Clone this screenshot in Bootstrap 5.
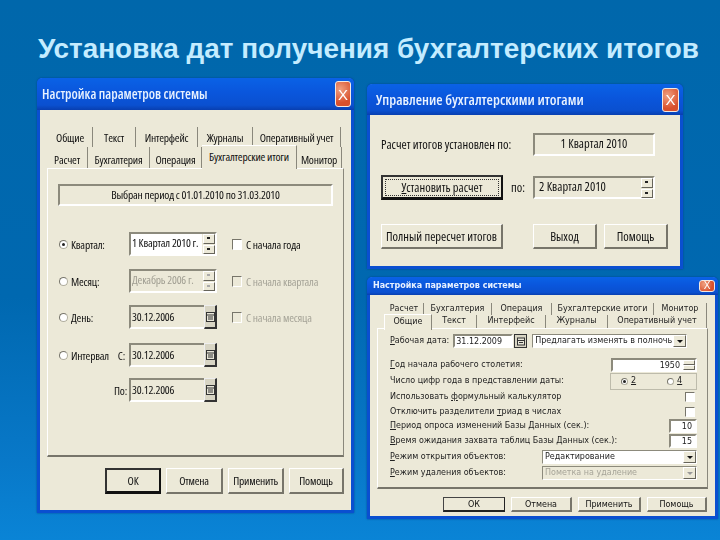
<!DOCTYPE html>
<html lang="ru">
<head>
<meta charset="utf-8">
<title>Установка дат</title>
<link href="https://cdn.jsdelivr.net/npm/bootstrap@5.3.0/dist/css/bootstrap.min.css" rel="stylesheet">
<style>
html,body{width:720px;height:540px;overflow:hidden}
body{position:relative;background:linear-gradient(180deg,#0067ab 0%,#0068b0 55%,#0878c8 85%,#0a84d6 100%);font-family:"Liberation Sans",sans-serif;color:#111}
.slide-title{position:absolute;left:38px;top:33px;margin:0;font:700 27.9px/32px "Liberation Sans",sans-serif;color:#c4ecff;white-space:nowrap}
.xpwin{position:absolute;background:#ece9d8;border:3px solid #0a4fd0;border-top:0;border-radius:5px 5px 0 0;filter:blur(.35px);box-shadow:0 0 2px #003f88;white-space:nowrap}
.w1{left:37px;top:78px;width:317px;height:435px;font:11.5px/15px "Open Sans",sans-serif;font-stretch:75%;letter-spacing:-.2px}
.w2{left:367px;top:84px;width:316px;height:185px;font:12.5px/15px "Open Sans",sans-serif;font-stretch:75%}
.w3{left:367px;top:277px;width:351px;height:242px;font:8px/12px "DejaVu Sans",sans-serif;color:#222}
.tbar{background:linear-gradient(180deg,#0a62e6 0%,#0a56dc 45%,#0a50d0 85%,#083fb0 100%);color:#e8f2ff;font-weight:600;margin:0 -3px;padding:0 3px 0 5px;border-radius:5px 5px 0 0}
.w1 .tbar{height:32px;font-size:13.5px;letter-spacing:0}
.w2 .tbar{height:31px;font-size:14.5px}
.w3 .tbar{height:18px;font-size:8px;font-weight:700;padding-left:6px}
.xbtn{background:radial-gradient(circle at 30% 30%,#f0a080,#d8502c 70%);border:1px solid #f4e8e0;border-radius:3px;color:#fff;font:400 15px/1 "Liberation Sans",sans-serif;display:flex;align-items:center;justify-content:center}
.w1 .xbtn{width:16px;height:26px}
.w2 .xbtn{width:17px;height:24px;margin-right:1px}
.w3 .xbtn{width:16px;height:12px;font-size:10px}
.tabrow{position:relative}
.tabx{height:100%;border-right:1px solid #8a887c;text-align:center;flex:none}
.w1 .tabrow1{margin:17px 0 0 8px;height:20px}
.w1 .tabrow2{margin:0 0 0 7px;height:21px}
.w1 .tabrow1 .tabx{padding-top:3px}
.w1 .tabrow2 .tabx{padding-top:5px}
.tabx.on{background:#ece9d8;position:relative;margin-bottom:-2px;height:calc(100% + 2px);border-top:1px solid #fff;z-index:2}
.w1 .tabrow2 .tabx.on{margin-top:-2px;padding-top:3px;height:24px}
.pane{border:1px solid #fff;border-right-color:#8a887c;border-bottom:2px solid #77756a;background:#ece9d8}
.w1 .pane{margin:0 7px;height:289px;padding:15px 10px 0}
.t45{width:45px}.t43{width:43px}.t62{width:62px}.t55{width:55px}.t89{width:88px}
.t41{width:41px}.t52{width:52px}.t95{width:95px}.t44{width:45px}
.inset{border:2px solid;border-color:#8c8a7c #fff #fff #8c8a7c;background:#ece9d8}
.readout{height:22px;text-align:center;line-height:18px}
.rowa{height:24px;flex:none}
.rb1{width:71px;flex:none}
.radio{width:9px;height:9px;border-radius:50%;background:#fff;border:1px solid #b0ae9e;border-top-color:#77756a;border-left-color:#77756a;display:inline-block;flex:none;margin:0 3px 0 1px;position:relative}
.radio.sel::after{content:"";position:absolute;inset:2px;border-radius:50%;background:#222}
.fld{height:100%;padding-left:1px;line-height:18px;flex:none}
.w1 .fld{width:88px}
.fld.live{background:linear-gradient(90deg,#fff 85%,#ece9d8 85%)}
.fld.dis{color:#a09e92}
.spin{width:12px;height:20px;margin-left:auto;display:flex;flex-direction:column;gap:1px}
.spin i{flex:1;background:#ece9d8;border:1px solid;border-color:#fff #66645a #66645a #fff;display:block;position:relative}
.spin i::after{content:"";position:absolute;left:3px;top:2px;width:3px;height:2px;background:#222}
.spin.off i::after{background:#aaa}
.cal{width:13px;height:24px;flex:none;background:#d8d5c4;border:1px solid #333;border-top-color:#eee;border-left-color:#eee;border-right-width:2px;border-bottom-width:2px;display:flex;align-items:center;justify-content:center;margin-right:-2px}
.chk{width:10px;height:11px;flex:none;background:#fff;border:1px solid;border-color:#77756a #fff #fff #77756a;margin-right:4px}
.chk.off{background:#ece9d8}
.off-t{color:#a6a498}
.gap26{height:26px}
.g13{height:13px}.g12{height:12px}.g14{height:14px}.g11{height:11px}.g19{height:19px}.g24{height:24px}
.ml15{margin-left:15px}
.lab2{width:71px;flex:none;text-align:right;padding-right:2px}
.xpbtn{--bs-btn-padding-x:0;--bs-btn-padding-y:0;--bs-btn-font-size:inherit;--bs-btn-line-height:1;--bs-btn-color:#111;--bs-btn-bg:#ece9d8;--bs-btn-border-radius:0;--bs-btn-border-width:0;font:inherit;letter-spacing:inherit;background:#ece9d8;border:1px solid;border-color:#fff #77756a #77756a #fff;border-bottom-width:2px;border-right-width:2px;border-radius:0;flex:none;color:#111;white-space:nowrap}
.xpbtn.dflt{border:2px solid #222;border-color:#333 #111 #111 #333;border-bottom-width:3px}
.w1 .foot{margin:11px 7px 0 0;height:26px;gap:5px}
.b56{width:56px}.b57{width:57px}.b55{width:55px}
.w2 .bodyw{padding:18px 10px 0 11px}
.rowb{height:23px}
.rowc{height:25px}
.rl{width:152px;flex:none}
.w2 .inset{width:122px;flex:none}
.w2 .xpbtn.big{width:122px;height:25px}
.w2 .dflt span{display:block;margin:2px;border:1px dotted #333;line-height:15px}
.po{width:30px;flex:none;text-align:center}
.vg8{width:30px;flex:none}
.b64{width:64px;height:25px}
.ms7{margin-left:7px}
.tabrow3{margin:8px 0 0 15px;height:12px}
.tabrow4{margin:0 0 0 14px;height:13px}
.w3 .tabx{line-height:12px}
.w3 .tabrow3 .tabx{height:12px;padding-top:0}
.w3 .tabrow4 .tabx{padding-top:0}
.w3 .tabrow4 .tabx.on{height:16px;margin-top:-1px;padding-top:1px;border-left:1px solid #fff}
.tc39{width:39px}.tc68{width:68px}.tc60{width:60px}.tc102{width:102px}.tc53{width:53px}
.tc48{width:48px}.tc45{width:45px}.tc69{width:69px}.tc62{width:62px}.tc99{width:99px}
.w3 .pane{margin:0 7px;height:161px;padding:4px 10px 0 12px;border-top:1px solid #fff}
.w3 .r3{height:16px}
.w3 .r14{height:14px}
.w3 .fld3{flex:none;line-height:11px;padding-left:1px}
.f60{width:60px;background:#fff;height:14px}
.cal3{width:13px;height:14px;flex:none;margin:0 5px 0 1px;border:1px solid #333;background:#d8d5c4;display:flex;align-items:center;justify-content:center}
.combo3{background:#fff;border:1px solid;border-color:#8c8a7c #fff #fff #8c8a7c;height:14px;line-height:12px;padding-left:2px;flex:none;display:flex;justify-content:space-between}
.c155{width:155px}
.dropx{width:13px;background:#ece9d8;border:1px solid;border-color:#fff #66645a #66645a #fff;position:relative;flex:none}
.dropx::after{content:"";position:absolute;left:3px;top:4px;border:3px solid transparent;border-top-color:#111;border-bottom:0}
.dropx.gr::after{border-top-color:#999}
.gb3{width:87px;height:17px;border:1px solid #bdbbab;margin-left:auto;display:flex;align-items:center;padding-left:9px;flex:none}
.gb3 .radio{width:7px;height:7px;margin-right:3px}
.gb3 .radio.sel::after{inset:1px}
.gap30{margin-right:30px}
.fyear{width:86px;margin-left:auto;background:#fff;height:14px;text-align:right;display:flex;justify-content:flex-end;line-height:11px;flex:none}
.spin3{width:12px;margin-left:3px;background:#ece9d8;display:flex;flex-direction:column;flex:none}
.spin3 i{flex:1;border:1px solid;border-color:#fff #66645a #66645a #fff;display:block}
.num3{width:28px;margin-left:auto;background:#fff;height:14px;text-align:right;padding-right:3px;line-height:11px;flex:none}
.chk3{width:10px;height:10px;margin-left:auto;background:#fff;border:1px solid;border-color:#77756a #fff #fff #77756a;flex:none;margin-right:2px}
.combo4{width:155px;margin-left:auto;flex:none}
.combo4.gr{background:#ece9d8;color:#a6a498}
.w3 .foot3{margin:8px 8px 0 0;height:15px;gap:6px}
.w3 .xpbtn{height:15px;line-height:11px}
.w3 .dflt{border-width:1px 1px 2px 1px;border-color:#444 #222 #222 #444}
.e62{width:62px}.e61{width:61px}.e63{width:63px}.e60{width:60px}
u{text-underline-offset:1px}
</style>
</head>
<body>
<h1 class="slide-title">Установка дат получения бухгалтерских итогов</h1>

<section class="xpwin w1">
  <div class="tbar d-flex align-items-center justify-content-between"><span>Настройка параметров системы</span><span class="xbtn">X</span></div>
  <div class="tabrow tabrow1 d-flex"><div class="tabx t45">Общие</div><div class="tabx t43">Текст</div><div class="tabx t62">Интерфейс</div><div class="tabx t55">Журналы</div><div class="tabx t89">Оперативный учет</div></div>
  <div class="tabrow tabrow2 d-flex"><div class="tabx t41">Расчет</div><div class="tabx t62">Бухгалтерия</div><div class="tabx t52">Операция</div><div class="tabx t95 on">Бухгалтерские итоги</div><div class="tabx t44">Монитор</div></div>
  <div class="pane">
    <div class="inset readout">Выбран период с 01.01.2010 по 31.03.2010</div>
    <div class="gap26"></div>
    <div class="rowa d-flex align-items-center">
      <div class="rb1 d-flex align-items-center"><span class="radio sel"></span><span>Квартал:</span></div>
      <div class="fld inset live d-flex">1 Квартал 2010 г.<div class="spin"><i></i><i></i></div></div>
      <div class="ml15 d-flex align-items-center"><span class="chk"></span>С начала года</div>
    </div>
    <div class="g13"></div>
    <div class="rowa d-flex align-items-center">
      <div class="rb1 d-flex align-items-center"><span class="radio"></span><span>Месяц:</span></div>
      <div class="fld inset dis d-flex">Декабрь 2006 г.<div class="spin off"><i></i><i></i></div></div>
      <div class="ml15 d-flex align-items-center off-t"><span class="chk off"></span>С начала квартала</div>
    </div>
    <div class="g12"></div>
    <div class="rowa d-flex align-items-center">
      <div class="rb1 d-flex align-items-center"><span class="radio"></span><span>День:</span></div>
      <div class="fld inset d-flex align-items-center justify-content-between">30.12.2006<span class="cal"><svg width="9" height="12" viewBox="0 0 9 12"><rect x=".5" y="1.5" width="8" height="9" fill="#e8e6d8" stroke="#333"/><path d="M1 4h7M2 6h5M2 8h5" stroke="#333"/></svg></span></div>
      <div class="ml15 d-flex align-items-center off-t"><span class="chk off"></span>С начала месяца</div>
    </div>
    <div class="g14"></div>
    <div class="rowa d-flex align-items-center">
      <div class="rb1 d-flex align-items-center"><span class="radio"></span><span>Интервал</span><span class="ms-auto pe-1">С:</span></div>
      <div class="fld inset d-flex align-items-center justify-content-between">30.12.2006<span class="cal"><svg width="9" height="12" viewBox="0 0 9 12"><rect x=".5" y="1.5" width="8" height="9" fill="#e8e6d8" stroke="#333"/><path d="M1 4h7M2 6h5M2 8h5" stroke="#333"/></svg></span></div>
    </div>
    <div class="g11"></div>
    <div class="rowa d-flex align-items-center">
      <div class="lab2">По:</div>
      <div class="fld inset d-flex align-items-center justify-content-between">30.12.2006<span class="cal"><svg width="9" height="12" viewBox="0 0 9 12"><rect x=".5" y="1.5" width="8" height="9" fill="#e8e6d8" stroke="#333"/><path d="M1 4h7M2 6h5M2 8h5" stroke="#333"/></svg></span></div>
    </div>
  </div>
  <div class="foot d-flex justify-content-end">
    <button type="button" class="btn xpbtn dflt b56">ОК</button>
    <button type="button" class="btn xpbtn b57">Отмена</button>
    <button type="button" class="btn xpbtn b56">Применить</button>
    <button type="button" class="btn xpbtn b55">Помощь</button>
  </div>
</section>

<section class="xpwin w2">
  <div class="tbar d-flex align-items-center justify-content-between"><span class="ps-1">Управление бухгалтерскими итогами</span><span class="xbtn">X</span></div>
  <div class="bodyw">
    <div class="rowb d-flex align-items-center"><div class="rl">Расчет итогов установлен по:</div><div class="inset readout rowb">1 Квартал 2010</div></div>
    <div class="g19"></div>
    <div class="d-flex align-items-center rowc">
      <button type="button" class="btn xpbtn dflt big"><span><u>У</u>становить расчет</span></button>
      <div class="po">по:</div>
      <div class="inset fld rowb d-flex ps-1">2 Квартал 2010<div class="spin"><i></i><i></i></div></div>
    </div>
    <div class="g24"></div>
    <div class="d-flex align-items-center rowc">
      <button type="button" class="btn xpbtn big">Полный пересчет итогов</button>
      <div class="vg8"></div>
      <button type="button" class="btn xpbtn b64">Выход</button>
      <button type="button" class="btn xpbtn b64 ms7">Помощь</button>
    </div>
  </div>
</section>

<section class="xpwin w3">
  <div class="tbar d-flex align-items-center justify-content-between"><span>Настройка параметров системы</span><span class="xbtn">X</span></div>
  <div class="tabrow tabrow3 d-flex"><div class="tabx tc39">Расчет</div><div class="tabx tc68">Бухгалтерия</div><div class="tabx tc60">Операция</div><div class="tabx tc102">Бухгалтерские итоги</div><div class="tabx tc53">Монитор</div></div>
  <div class="tabrow tabrow4 d-flex"><div class="tabx tc48 on">Общие</div><div class="tabx tc45">Текст</div><div class="tabx tc69">Интерфейс</div><div class="tabx tc62">Журналы</div><div class="tabx tc99">Оперативный учет</div></div>
  <div class="pane">
    <div class="r3 d-flex align-items-center"><span><u>Р</u>абочая дата:</span><span class="fld3 f60 inset ms-1">31.12.2009</span><span class="cal3"><svg width="8" height="9" viewBox="0 0 8 9"><rect x=".5" y="1" width="7" height="7" fill="#e8e6d8" stroke="#333"/><path d="M1 3.5h6M2 5.5h4" stroke="#333"/></svg></span><div class="combo3 c155"><span>Предлагать изменять в полночь</span><span class="dropx"></span></div></div>
    <div class="r3 mt-2 d-flex align-items-center"><span><u>Г</u>од начала рабочего столетия:</span><div class="fyear inset">1950<span class="spin3"><i></i><i></i></span></div></div>
    <div class="r3 d-flex align-items-center"><span>Число цифр года в представлении даты:</span><div class="gb3"><span class="radio sel"></span><u class="gap30">2</u><span class="radio"></span><u>4</u></div></div>
    <div class="r3 d-flex align-items-center"><span>Использовать <u>ф</u>ормульный калькулятор</span><span class="chk3"></span></div>
    <div class="r14 d-flex align-items-center"><span>Отключить разделители <u>т</u>риад в числах</span><span class="chk3"></span></div>
    <div class="r14 d-flex align-items-center"><span><u>П</u>ериод опроса изменений Базы Данных (сек.):</span><span class="num3 inset">10</span></div>
    <div class="r3 d-flex align-items-center"><span><u>В</u>ремя ожидания захвата таблиц Базы Данных (сек.):</span><span class="num3 inset">15</span></div>
    <div class="r3 d-flex align-items-center"><span><u>Р</u>ежим открытия объектов:</span><div class="combo3 combo4"><span>Редактирование</span><span class="dropx"></span></div></div>
    <div class="r3 d-flex align-items-center"><span><u>Р</u>ежим удаления объектов:</span><div class="combo3 combo4 gr"><span>Пометка на удаление</span><span class="dropx gr"></span></div></div>
  </div>
  <div class="foot3 d-flex justify-content-end">
    <button type="button" class="btn xpbtn dflt e62">ОК</button>
    <button type="button" class="btn xpbtn e61">Отмена</button>
    <button type="button" class="btn xpbtn e63">Применить</button>
    <button type="button" class="btn xpbtn e60">Помощь</button>
  </div>
</section>

<script src="https://cdn.jsdelivr.net/npm/bootstrap@5.3.0/dist/js/bootstrap.bundle.min.js"></script>
</body>
</html>
